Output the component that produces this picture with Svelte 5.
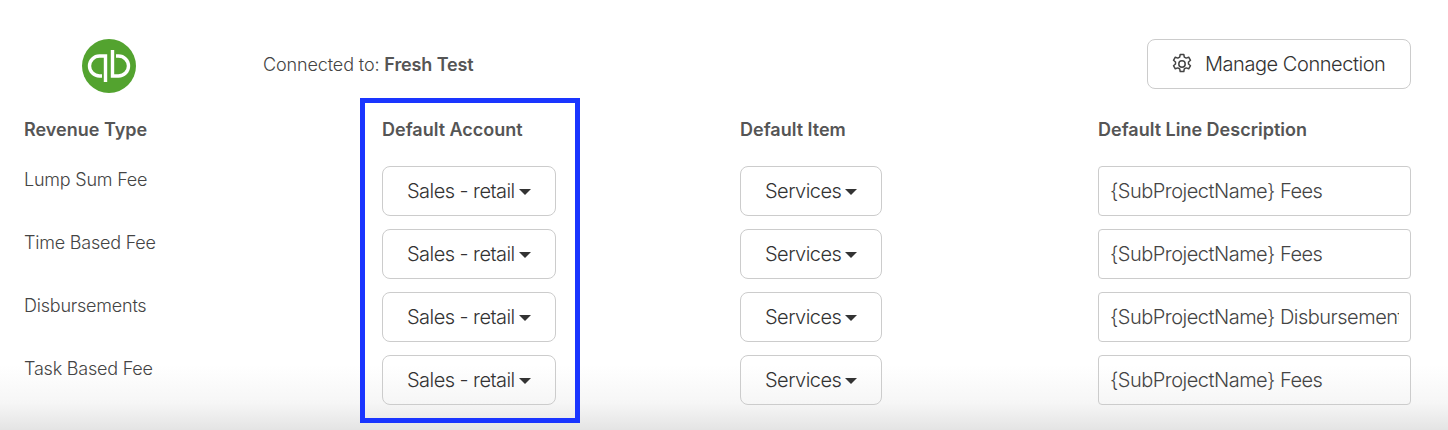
<script>
  const rows = [
    { label: 'Lump Sum Fee', text: '{SubProjectName} Fees' },
    { label: 'Time Based Fee', text: '{SubProjectName} Fees' },
    { label: 'Disbursements', text: '{SubProjectName} Disbursements' },
    { label: 'Task Based Fee', text: '{SubProjectName} Fees' }
  ];
</script>

<div class="page">
  <header class="top">
    <div class="logo-cell">
      <svg class="logo" viewBox="0 0 54 54" width="54" height="54" aria-label="QuickBooks">
        <circle cx="27" cy="27" r="27" fill="#53a32f" />
        <path d="M23.500 43V17h-6a10 10 0 0 0 0 20H20" fill="none" stroke="#fff" stroke-width="3.400" />
        <path d="M30.500 11v26h6a10 10 0 0 0 0-20H34" fill="none" stroke="#fff" stroke-width="3.400" />
      </svg>
    </div>
    <p class="connected">Connected to: <strong>Fresh Test</strong></p>
    <button class="manage">
      <svg viewBox="0 0 24 24" width="24" height="24" fill="none" stroke="#444" stroke-width="1.500" stroke-linejoin="round" aria-hidden="true">
        <path d="M10.200 2.500h3.600l.5 2.600 1.900 1 2.500-.9 1.800 3.100-2 1.700v2l2 1.700-1.800 3.100-2.500-.9-1.900 1-.5 2.600h-3.600l-.5-2.600-1.900-1-2.500.9-1.800-3.100 2-1.700v-2l-2-1.700 1.800-3.100 2.500.9 1.900-1z" />
        <circle cx="12" cy="12" r="3.200" />
      </svg>
      <span>Manage Connection</span>
    </button>
  </header>

  <div class="table">
    <div class="head">Revenue Type</div>
    <div class="head">Default Account</div>
    <div class="head">Default Item</div>
    <div class="head">Default Line Description</div>
    {#each rows as row}
      <div class="label">{row.label}</div>
      <div><button class="select">Sales - retail<i class="caret"></i></button></div>
      <div><button class="select">Services<i class="caret"></i></button></div>
      <div><input class="line" value={row.text} /></div>
    {/each}
  </div>

  <div class="highlight"></div>
</div>

<style>
  :global(body) { margin: 0; background: #fff; }
  .page {
    position: relative;
    width: 1448px;
    height: 430px;
    overflow: hidden;
    box-sizing: border-box;
    padding: 39px 37px 0 24px;
    font-family: Inter, "Liberation Sans", sans-serif;
    font-weight: 300;
    color: #444;
    background: linear-gradient(to bottom, #fff 0, #fff 365px, #f6f6f6 403px, #e4e4e4 430px);
  }
  .top { display: flex; align-items: center; height: 50px; }
  .logo-cell { width: 238px; padding-left: 58px; box-sizing: border-box; height: 54px; align-self: flex-start; }
  .logo { display: block; }
  .connected { margin: 0 0 0 1px; font-size: 18px; letter-spacing: -0.12px; flex: 1; }
  .connected strong { font-weight: 600; color: #555; }
  .manage {
    display: flex; align-items: center; gap: 11px;
    width: 264px; height: 50px; padding: 0 0 0 22px; box-sizing: border-box;
    background: #fff; border: 1px solid #ccc; border-radius: 8px;
    font: inherit; font-size: 20px; letter-spacing: -0.45px; color: #333;
  }
  .table {
    display: grid;
    grid-template-columns: 358px 358px 358px 313px;
    grid-template-rows: 77px;
    grid-auto-rows: 63px;
  }
  .head { font-size: 18px; font-weight: 600; letter-spacing: 0; padding-top: 30px; line-height: 22px; color: #555; }
  .label { font-size: 18px; letter-spacing: -0.22px; line-height: 22px; padding-top: 3px; }
  .select {
    display: inline-flex; align-items: center; justify-content: center; gap: 4px;
    height: 50px; padding: 0 24px; box-sizing: border-box;
    background: transparent; border: 1px solid #ccc; border-radius: 8px;
    font: inherit; font-size: 20px; letter-spacing: -0.55px; color: #333;
  }
  .caret {
    display: block; width: 0; height: 0; margin-top: 2px;
    border-left: 6px solid transparent; border-right: 6px solid transparent; border-top: 6px solid #333;
  }
  .line {
    display: block; width: 313px; height: 50px; padding: 0 11px; box-sizing: border-box;
    background: transparent; border: 1px solid #ccc; border-radius: 4px;
    font: inherit; font-size: 20px; letter-spacing: -0.5px; color: #444; outline: none;
  }
  .highlight {
    position: absolute; left: 360px; top: 98px; width: 220px; height: 325px;
    box-sizing: border-box; border: 5px solid #1a35ff;
  }
</style>
